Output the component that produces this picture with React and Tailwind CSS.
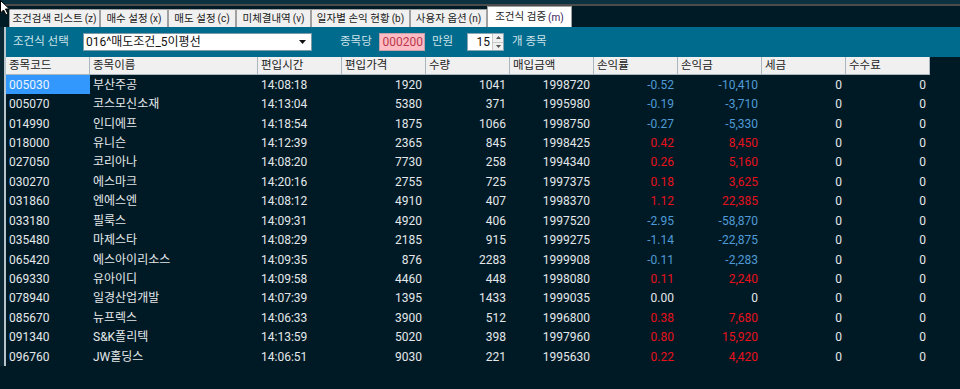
import React from "react";

const rows = [
  ["005030", "부산주공", "14:08:18", "1920", "1041", "1998720", "-0.52", "-10,410"],
  ["005070", "코스모신소재", "14:13:04", "5380", "371", "1995980", "-0.19", "-3,710"],
  ["014990", "인디에프", "14:18:54", "1875", "1066", "1998750", "-0.27", "-5,330"],
  ["018000", "유니슨", "14:12:39", "2365", "845", "1998425", "0.42", "8,450"],
  ["027050", "코리아나", "14:08:20", "7730", "258", "1994340", "0.26", "5,160"],
  ["030270", "에스마크", "14:20:16", "2755", "725", "1997375", "0.18", "3,625"],
  ["031860", "엔에스엔", "14:08:12", "4910", "407", "1998370", "1.12", "22,385"],
  ["033180", "필룩스", "14:09:31", "4920", "406", "1997520", "-2.95", "-58,870"],
  ["035480", "마제스타", "14:08:29", "2185", "915", "1999275", "-1.14", "-22,875"],
  ["065420", "에스아이리소스", "14:09:35", "876", "2283", "1999908", "-0.11", "-2,283"],
  ["069330", "유아이디", "14:09:58", "4460", "448", "1998080", "0.11", "2,240"],
  ["078940", "일경산업개발", "14:07:39", "1395", "1433", "1999035", "0.00", "0"],
  ["085670", "뉴프렉스", "14:06:33", "3900", "512", "1996800", "0.38", "7,680"],
  ["091340", "S&K폴리텍", "14:13:59", "5020", "398", "1997960", "0.80", "15,920"],
  ["096760", "JW홀딩스", "14:06:51", "9030", "221", "1995630", "0.22", "4,420"],
];

const tabs = [
  ["조건검색 리스트", "(z)", "w-[91px]"],
  ["매수 설정", "(x)", "w-[68px]"],
  ["매도 설정", "(c)", "w-[68px]"],
  ["미체결내역", "(v)", "w-[75px]"],
  ["일자별 손익 현황", "(b)", "w-[99px]"],
  ["사용자 옵션", "(n)", "w-[77px]"],
];

const headers = [
  ["종목코드", "w-[84px]"],
  ["종목이름", "w-[168px]"],
  ["편입시간", "w-[84px]"],
  ["편입가격", "w-[84px]"],
  ["수량", "w-[84px]"],
  ["매입금액", "w-[84px]"],
  ["손익률", "w-[84px]"],
  ["손익금", "w-[84px]"],
  ["세금", "w-[84px]"],
  ["수수료", "w-[84px]"],
];

const font = "font-['Roboto','Noto_Sans_CJK_KR',sans-serif]";

function Row({ r, first }) {
  const neg = r[6].startsWith("-");
  const zero = r[6] === "0.00";
  const pl = zero ? "text-[#e4e8ea]" : neg ? "text-[#4f9ad6]" : "text-[#e8101c]";
  return (
    <div className="flex h-[19.43px] items-center text-[12px] text-[#e4e8ea]">
      <div className={`w-[84px] h-full flex items-center pl-[3px] ${first ? "bg-[#3298fe] text-[#eaf4ff]" : ""}`}>{r[0]}</div>
      <div className="w-[168px] pl-[3px]">{r[1]}</div>
      <div className="w-[84px] pl-[3px]">{r[2]}</div>
      <div className="w-[84px] text-right pr-[4px]">{r[3]}</div>
      <div className="w-[84px] text-right pr-[4px]">{r[4]}</div>
      <div className="w-[84px] text-right pr-[4px]">{r[5]}</div>
      <div className={`w-[84px] text-right pr-[4px] ${pl}`}>{r[6]}</div>
      <div className={`w-[84px] text-right pr-[4px] ${pl}`}>{r[7]}</div>
      <div className="w-[84px] text-right pr-[4px]">0</div>
      <div className="w-[84px] text-right pr-[4px]">0</div>
    </div>
  );
}

export default function App() {
  return (
    <div className={`relative w-[960px] h-[389px] overflow-hidden bg-[#001a25] ${font}`}>
      <div className="h-[4px] bg-[#0c3140]" />
      <div className="h-[2px] bg-[#4c4c4c]" />
      <div className="flex h-[21px] items-end pl-[9px] bg-[#001b26]">
        {tabs.map(([t, k, w]) => (
          <div
            key={t}
            className={`${w} h-[18px] flex items-center justify-center gap-[2px] bg-[#f0f0f0] border-l border-r border-t border-[#a0a0a0] text-[10.5px] text-[#1a1a1a] whitespace-nowrap overflow-hidden`}
          >
            <span>{t}</span>
            <span className="text-[10px] text-[#222]">{k}</span>
          </div>
        ))}
        <div className="w-[85px] h-[21px] flex items-center justify-center gap-[2px] bg-white border-l border-r border-t border-[#a0a0a0] text-[10.5px] text-[#1a1a1a] whitespace-nowrap">
          <span>조건식 검증</span>
          <span className="text-[10px] text-[#3a1a5a]">(m)</span>
        </div>
      </div>
      <div className="flex">
        <div className="w-[4px] bg-[#0b2733]" />
        <div className="w-[2px] bg-[#b8c4cc]" />
        <div className="flex-1">
          <div className="h-[30px] bg-[#006b8c] flex items-center text-[11.5px]">
            <span className="ml-[7px] w-[70px] text-[#cfe3ea]">조건식 선택</span>
            <div className="w-[229px] h-[18px] bg-white border border-[#7a9aa8] flex items-center justify-between pl-[2px] pr-[4px] text-[12px] text-[#111]">
              <span>016^매도조건_5이평선</span>
              <svg width="8" height="5" viewBox="0 0 8 5"><path d="M0 0H7L3.5 4Z" fill="#111" /></svg>
            </div>
            <span className="ml-[28px] w-[39px] text-[#cfe3ea]">종목당</span>
            <div className="w-[46px] h-[18px] bg-[#ffbcc4] border border-[#c8a0a8] flex items-center justify-end pr-[1px] text-[12px] text-[#b83a4c]">000200</div>
            <span className="ml-[7px] w-[35px] text-[#cfe3ea]">만원</span>
            <div className="w-[37px] h-[18px] bg-white border border-[#8aa6b2] flex items-center justify-end text-[12px] text-[#111]">
              <span className="pr-[2px]">15</span>
              <div className="w-[11px] h-full flex flex-col border-l border-[#c8c8c8] bg-[#f0f0f0]">
                <div className="flex-1 flex items-center justify-center border-b border-[#c8c8c8]">
                  <svg width="5" height="3" viewBox="0 0 5 3"><path d="M0 3H5L2.5 0Z" fill="#555" /></svg>
                </div>
                <div className="flex-1 flex items-center justify-center">
                  <svg width="5" height="3" viewBox="0 0 5 3"><path d="M0 0H5L2.5 3Z" fill="#555" /></svg>
                </div>
              </div>
            </div>
            <span className="ml-[8px] text-[#cfe3ea]">개 종목</span>
          </div>
          <div className="flex h-[18px]">
            {headers.map(([h, w]) => (
              <div key={h} className={`${w} h-full bg-[#f0f0f0] border-r border-b border-[#a9b6bd] pl-[3px] flex items-center text-[11.5px] text-[#222]`}>
                {h}
              </div>
            ))}
            <div className="flex-1" />
          </div>
          <div>
            {rows.map((r, i) => (
              <Row key={r[0]} r={r} first={i === 0} />
            ))}
          </div>
        </div>
      </div>
      <svg className="absolute left-0 top-0" width="10" height="16" viewBox="0 0 10 16">
        <path d="M0.5 0.5V13L3.5 10L6 15L8 14L5.5 9H9.5Z" fill="#fff" stroke="#000" strokeWidth="1" />
      </svg>
    </div>
  );
}
